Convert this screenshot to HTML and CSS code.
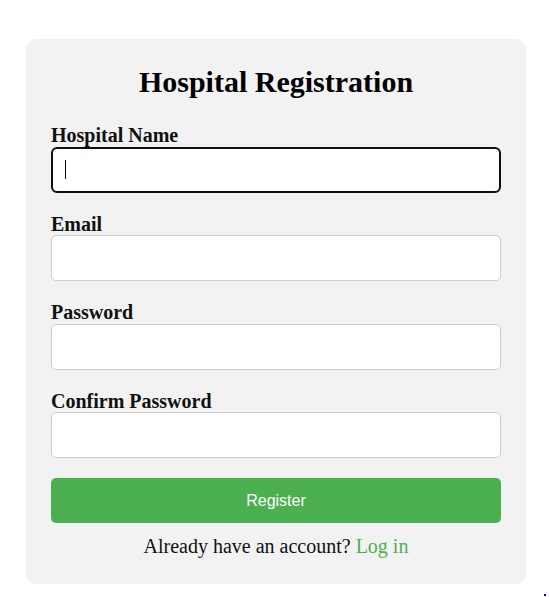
FILE: index.html
```html
<!DOCTYPE html>
<html lang="en">
<head>
<meta charset="utf-8">
<title>Hospital Registration</title>
<link rel="stylesheet" href="styles.css">
</head>
<body>
<div class="card">
  <h2 class="title">Hospital Registration</h2>
  <form class="form">
    <label class="label" for="name">Hospital Name</label>
    <div class="field">
      <input class="input input-focused" id="name" type="text">
      <span class="caret"></span>
    </div>
    <label class="label" for="email">Email</label>
    <div class="field"><input class="input" id="email" type="email"></div>
    <label class="label" for="pw">Password</label>
    <div class="field"><input class="input" id="pw" type="password"></div>
    <label class="label" for="pw2">Confirm Password</label>
    <div class="field"><input class="input" id="pw2" type="password"></div>
    <button class="btn" type="button">Register</button>
  </form>
  <p class="footer">Already have an account? <a class="link" href="#">Log in</a></p>
</div>
<span class="dot"></span>
</body>
</html>
```
FILE: styles.css
```css
html, body {
  margin: 0;
  padding: 0;
  background: #ffffff;
}
body {
  font-family: "Liberation Serif", "Times New Roman", serif;
  padding-top: 39px;
  height: 597px;
  box-sizing: border-box;
  overflow: hidden;
}
.card {
  width: 500px;
  box-sizing: border-box;
  margin-left: 26px;
  padding: 25px 25px 26px;
  background: #f2f2f2;
  border-radius: 10px;
}
.title {
  margin: 0 0 25px;
  font-size: 30px;
  line-height: 35px;
  font-weight: bold;
  text-align: center;
  color: #000;
}
.form {
  display: flex;
  flex-direction: column;
  margin: 0;
}
.label {
  display: block;
  font-size: 20px;
  font-weight: bold;
  color: #111;
  line-height: 22.5px;
}
.field {
  position: relative;
  margin-bottom: 20px;
}
.input {
  display: block;
  width: 100%;
  box-sizing: border-box;
  height: 46px;
  padding: 12px;
  font-size: 16px;
  border: 1px solid #cccccc;
  border-radius: 5px;
  background: #fff;
  outline: none;
  margin: 0;
}
.input-focused {
  border: 2px solid #101010;
  border-radius: 6px;
  padding: 11px 12px;
}
.caret {
  position: absolute;
  left: 14px;
  top: 13px;
  width: 1px;
  height: 19px;
  background: #000;
}
.btn {
  display: block;
  width: 100%;
  height: 45px;
  border: none;
  border-radius: 5px;
  background: #4caf50;
  color: #fff;
  font-family: "Liberation Sans", Arial, sans-serif;
  font-size: 16px;
  padding: 0;
  margin: 0;
}
.footer {
  margin: 12px 0 0;
  text-align: center;
  font-size: 20px;
  line-height: 23px;
  color: #111;
}
.link {
  color: #4caf50;
  text-decoration: none;
}
.dot {
  position: absolute;
  left: 544px;
  top: 594px;
  width: 2px;
  height: 2px;
  background: #0000ee;
}
```
